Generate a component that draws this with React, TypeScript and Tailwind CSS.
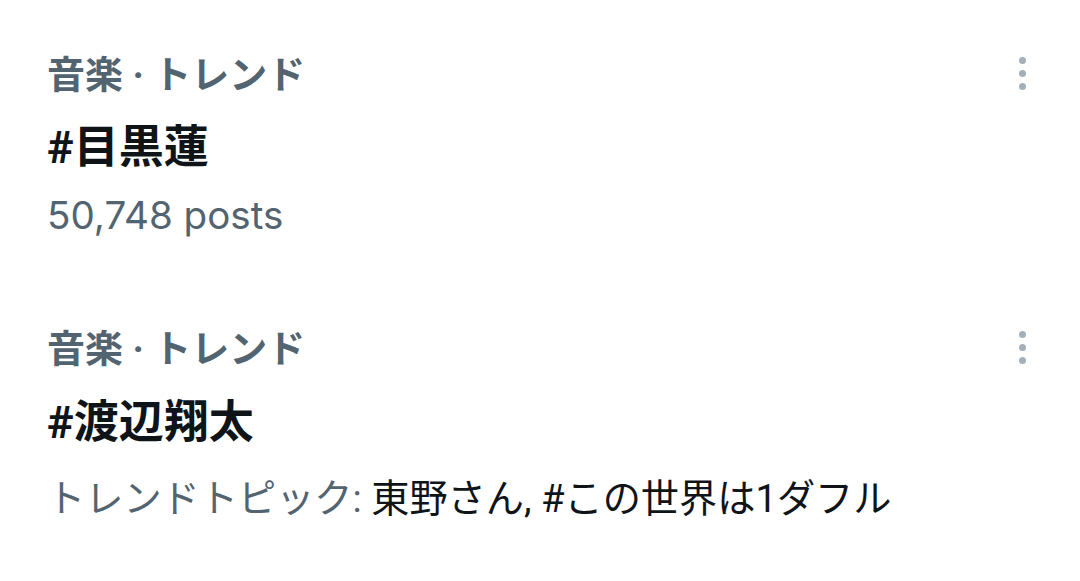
const trends = [
  {
    category: "音楽 · トレンド",
    title: "#目黒蓮",
    metaGap: "mt-[21px]",
    meta: <span className="font-['Inter','Noto_Sans_CJK_JP',sans-serif] text-[38.6px] text-[#536471]">50,748 posts</span>,
  },
  {
    category: "音楽 · トレンド",
    title: "#渡辺翔太",
    metaGap: "mt-[30px]",
    meta: (
      <span className="text-[38.2px]">
        <span className="text-[#536471]">トレンドトピック: </span>
        <span className="text-[#0f1419]">東野さん, #この世界は1ダフル</span>
      </span>
    ),
  },
];

function MoreDots() {
  return (
    <div className="flex flex-col items-center gap-[6px] pt-[5px]">
      <span className="h-[7px] w-[7px] rounded-full bg-[#a3b0ba]" />
      <span className="h-[7px] w-[7px] rounded-full bg-[#a3b0ba]" />
      <span className="h-[7px] w-[7px] rounded-full bg-[#a3b0ba]" />
    </div>
  );
}

export default function App() {
  return (
    <div
      className="h-[581px] w-[1080px] bg-white pl-[47px] pr-[54px] pt-[52px]"
      style={{ fontFamily: 'Roboto, "Noto Sans CJK JP", sans-serif' }}
    >
      {trends.map((t, i) => (
        <div key={i} className={`flex justify-between ${i === 0 ? "mb-[79px]" : ""}`}>
          <div className="flex flex-col">
            <div className="text-[38px] font-bold leading-[46px] text-[#536471]">{t.category}</div>
            <div className={`${i === 0 ? "mt-[27px]" : "mt-[28px]"} text-[45px] font-bold leading-[46px] text-[#0f1419]`}>
              {t.title}
            </div>
            <div className={`${t.metaGap} leading-[46px]`}>{t.meta}</div>
          </div>
          <MoreDots />
        </div>
      ))}
    </div>
  );
}
